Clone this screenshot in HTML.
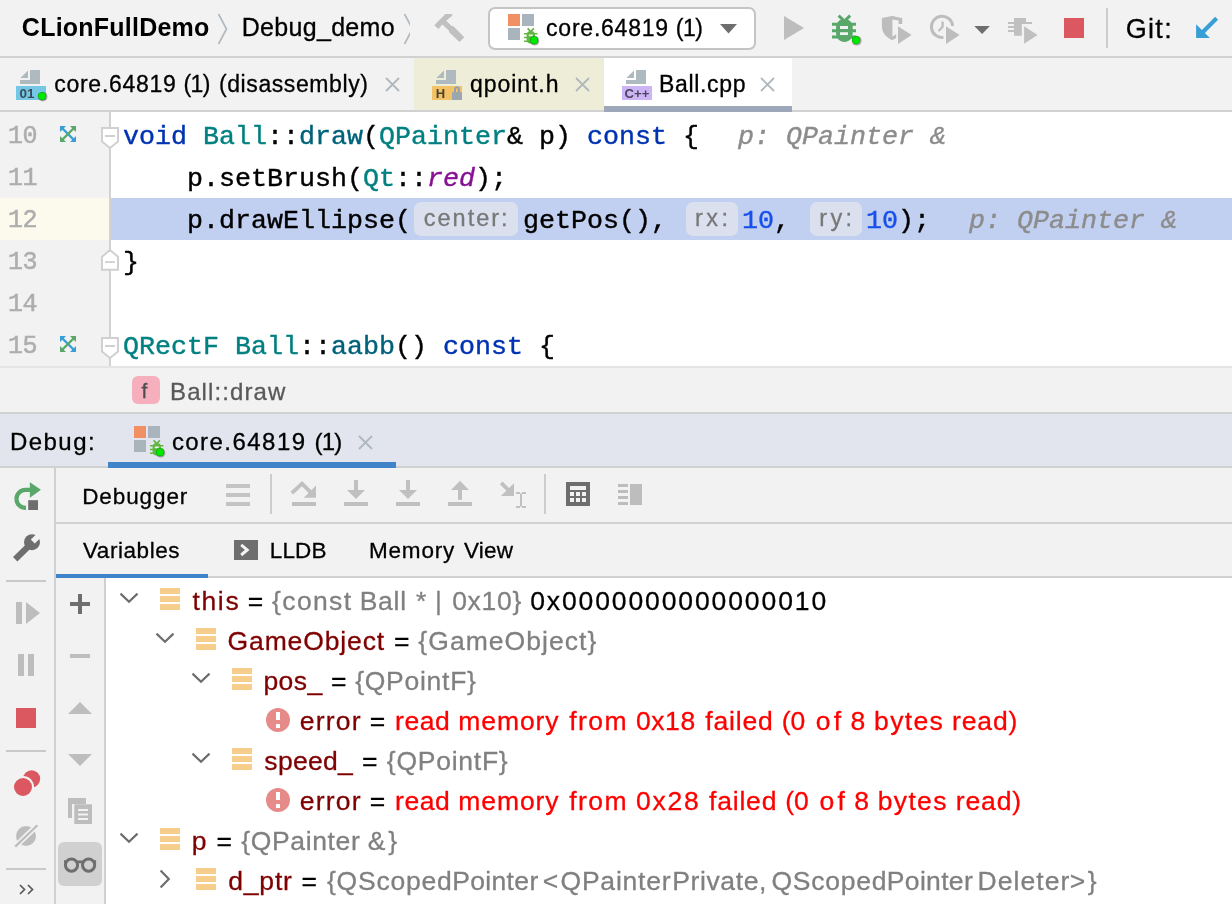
<!DOCTYPE html>
<html><head><meta charset="utf-8"><title>CLion</title>
<style>
html,body{margin:0;padding:0}
body{width:1232px;height:904px;overflow:hidden;background:#f2f2f2;position:relative;font-family:"Liberation Sans",sans-serif}
.a{position:absolute}
.t{position:absolute;white-space:pre;line-height:30px;-webkit-text-stroke:0.3px}
.m{position:absolute;white-space:pre;line-height:30px;font-family:"Liberation Mono",monospace;font-size:26.67px;-webkit-text-stroke:0.4px;color:#000}
.ln{position:absolute;left:8px;white-space:pre;line-height:30px;font-family:"Liberation Mono",monospace;font-size:25px;letter-spacing:-0.6px;-webkit-text-stroke:0.5px;color:#adadad}
.kw{color:#0033b3}.cl{color:#008080}.fn{color:#00627a}.nu{color:#1750eb}.it{color:#8c8c8c;font-style:italic}.en{color:#871094;font-style:italic}
.hint{position:absolute;top:202px;height:34px;border-radius:7px;background:#dae0ee}
svg{position:absolute;overflow:visible}
#root{position:absolute;left:0;top:0;width:1232px;height:904px;will-change:transform}
</style></head><body><div id="root">

<!-- ===== top toolbar ===== -->
<div class="a" style="left:0;top:56px;width:1232px;height:2px;background:#d1d1d1"></div>
<svg style="left:216px;top:13px" width="14" height="32" viewBox="0 0 14 32"><path d="M2.5 1 L10.5 16 L2.5 31" fill="none" stroke="#b2b9bf" stroke-width="1.7"/></svg>
<svg style="left:402px;top:13px;overflow:hidden" width="8.3" height="32" viewBox="0 0 8.3 32"><path d="M2.5 1 L10.5 16 L2.5 31" fill="none" stroke="#b2b9bf" stroke-width="1.7"/></svg>
<!-- hammer -->
<svg style="left:430px;top:10px" width="40" height="36" viewBox="430 10 40 36"><path d="M434.3 25.2 L445.4 14.1 L452.2 14.1 L452.2 15.8 L446.2 20.8 L451.6 25.9 L453.4 26.2 L464.3 37.2 L459.5 42.1 L449.4 32.6 L448.8 30.6 L442.4 24.6 L438.4 29 Z" fill="#c0c0c0"/></svg>
<!-- run config dropdown -->
<div class="a" style="left:488px;top:7px;width:264px;height:39px;border:2px solid #c4c4c4;border-radius:7px;background:#fff"></div>
<div class="a" style="left:508px;top:14px;width:12px;height:12px;background:#f19064"></div>
<div class="a" style="left:522px;top:14px;width:12px;height:12px;background:#a9b4bc"></div>
<div class="a" style="left:508px;top:28px;width:12px;height:12px;background:#a9b4bc"></div>
<svg style="left:523px;top:27px" width="20" height="20" viewBox="0 0 20 20"><g stroke="#62b543" fill="none"><path d="M4.6 1.4 L7.75 4.6 L10.9 1.4" stroke-width="1.7"/><path d="M1 6.8H14.5M1 10.5H14.5M1 14.2H14.5" stroke-width="1.6"/></g><rect x="3.6" y="4" width="8.4" height="12.6" rx="4" fill="#62b543"/><rect x="5.8" y="7.5" width="4" height="1.7" fill="#fff" opacity=".85"/><circle cx="11.7" cy="13.9" r="4.6" fill="#6a5a6a" opacity=".5"/><circle cx="11.1" cy="13.3" r="4.1" fill="#00a800"/><circle cx="11.1" cy="13.3" r="3.5" fill="#00e800"/></svg>
<svg style="left:720px;top:24px" width="18" height="10" viewBox="0 0 18 10"><path d="M0 0 H17 L8.5 9.5 Z" fill="#6e6e6e"/></svg>
<!-- run -->
<svg style="left:784px;top:16px" width="20" height="24" viewBox="0 0 20 24"><path d="M0 0 L20 12 L0 24 Z" fill="#bdbdbd"/></svg>
<!-- debug bug -->
<svg style="left:828px;top:10px" width="36" height="36" viewBox="828 10 36 36"><g fill="#59a869"><path d="M836.1 27 C836.1 22.4 839.8 19.1 844.4 19.1 C849 19.1 852.7 22.4 852.7 27 V33.5 C852.7 38.5 849 41.9 844.4 41.9 C839.8 41.9 836.1 38.5 836.1 33.5 Z"/><path d="M832 22.8h24v3h-24zM832 29.2h24v3h-24zM832 35.6h24v3h-24z"/></g><path d="M838.6 15.6 L844.4 21 L850.2 15.6" fill="none" stroke="#59a869" stroke-width="3"/><path d="M840 26h8v2.9h-8zM840 32.2h8v2.9h-8z" fill="#f2f2f2"/><circle cx="856.7" cy="40.7" r="4.9" fill="#6a5a6a" opacity=".5"/><circle cx="856.1" cy="40.1" r="4.2" fill="#00a800"/><circle cx="856.1" cy="40.1" r="3.6" fill="#00e800"/></svg>
<!-- coverage (shield + play) -->
<svg style="left:878px;top:10px" width="40" height="36" viewBox="878 10 40 36"><path d="M881.9 18 C886 17.6 889 16.8 892.2 15.8 C895.4 16.8 898 17.6 902.2 18 V24 H898.6 V20.6 L892.4 19.6 V36.8 L896.3 34 V38 L892.2 40.2 C885 36.5 881.9 32 881.9 26 Z" fill="#bdbdbd"/><path d="M898 26.3 L911.6 35 L898 43.9 Z" fill="#bdbdbd" stroke="#f2f2f2" stroke-width="3" paint-order="stroke"/></svg>
<!-- profile (clock + play) -->
<svg style="left:926px;top:10px" width="40" height="36" viewBox="926 10 40 36"><path d="M952.6 26 A10.6 10.6 0 1 0 943.4 37.3" fill="none" stroke="#bdbdbd" stroke-width="3"/><path d="M942.6 21.4 V26.9 L938.6 31" fill="none" stroke="#bdbdbd" stroke-width="2.3"/><path d="M946 26.3 L959.6 35 L946 43.9 Z" fill="#bdbdbd" stroke="#f2f2f2" stroke-width="3" paint-order="stroke"/></svg>
<svg style="left:974px;top:26px" width="17" height="9" viewBox="0 0 17 9"><path d="M0.3 0 H15.9 L8.1 8 Z" fill="#6e6e6e"/></svg>
<!-- run multiple -->
<svg style="left:1004px;top:10px" width="40" height="36" viewBox="1004 10 40 36"><g fill="#c0c0c0"><path d="M1014 18.1 H1026 V22 H1032.1 V24 H1021.8 V35.8 H1014 Z"/><path d="M1008 22h6v2h-6zM1008 26h6v2h-6zM1008 30h6v2h-6z"/><path d="M1024.1 26.3 L1037.6 35 L1024.1 43.8 Z"/></g></svg>
<div class="a" style="left:1064px;top:18px;width:20px;height:20px;background:#db5860"></div>
<div class="a" style="left:1106px;top:8px;width:2px;height:40px;background:#cdcdcd"></div>
<!-- git update arrow -->
<svg style="left:1192px;top:12px" width="30" height="30" viewBox="1192 12 30 30"><path d="M1216.6 18.3 L1202.4 32.5" stroke="#389fd6" stroke-width="4.2" fill="none"/><path d="M1196.1 24.3 V38 H1209.9 Z" fill="#389fd6"/></svg>

<!-- ===== editor tabs ===== -->
<div class="a" style="left:414px;top:58px;width:190px;height:52px;background:#eeeed8"></div>
<div class="a" style="left:604px;top:58px;width:188px;height:52px;background:#fff"></div>
<div class="a" style="left:0;top:110px;width:1232px;height:2px;background:#d1d1d1"></div>
<div class="a" style="left:604px;top:106px;width:188px;height:6px;background:#9ca8ba"></div>
<!-- file icons -->
<svg style="left:16px;top:70px" width="32" height="32" viewBox="0 0 32 32"><path d="M14 0h10v14H4v-4h10z" fill="#aeb9c0"/><path d="M12 0.4 V8 H4.4Z" fill="#aeb9c0"/><rect x="0" y="16" width="30" height="14" fill="#74c8e6"/><text x="3.6" y="28" font-family="Liberation Sans" font-weight="bold" font-size="13.5" fill="#3b4a54">01</text><circle cx="26.7" cy="26.7" r="4.8" fill="#6a5a6a" opacity=".5"/><circle cx="26.1" cy="26.1" r="4.2" fill="#00a800"/><circle cx="26.1" cy="26.1" r="3.6" fill="#00e800"/></svg>
<svg style="left:432px;top:70px" width="32" height="32" viewBox="0 0 32 32"><path d="M14 0h10v14H4v-4h10z" fill="#aeb9c0"/><path d="M12 0.4 V8 H4.4Z" fill="#aeb9c0"/><rect x="0" y="16" width="30" height="14" fill="#f4c266"/><text x="3.8" y="28" font-family="Liberation Sans" font-weight="bold" font-size="13" fill="#4a4333">H</text><rect x="20" y="22.2" width="10" height="7.8" fill="#9aa7b0"/><path d="M23 22.4 v-3.1 a1.9 2.1 0 0 1 3.8 0 v3.1" fill="none" stroke="#8fa0b3" stroke-width="2"/></svg>
<svg style="left:622px;top:70px" width="32" height="32" viewBox="0 0 32 32"><path d="M14 0h10v14H4v-4h10z" fill="#aeb9c0"/><path d="M12 0.4 V8 H4.4Z" fill="#aeb9c0"/><rect x="0" y="16" width="30" height="14" fill="#cdb5f5"/><text x="2.6" y="28" font-family="Liberation Sans" font-weight="bold" font-size="13.2" fill="#4b4360">C++</text></svg>
<!-- close X -->
<svg style="left:385px;top:77px" width="15" height="15" viewBox="0 0 15 15"><path d="M1 1 L14 14 M14 1 L1 14" stroke="#b1b8bd" stroke-width="1.8" fill="none"/></svg>
<svg style="left:575px;top:77px" width="15" height="15" viewBox="0 0 15 15"><path d="M1 1 L14 14 M14 1 L1 14" stroke="#b1b8bd" stroke-width="1.8" fill="none"/></svg>
<svg style="left:760px;top:77px" width="15" height="15" viewBox="0 0 15 15"><path d="M1 1 L14 14 M14 1 L1 14" stroke="#b1b8bd" stroke-width="1.8" fill="none"/></svg>

<!-- ===== editor ===== -->
<div class="a" style="left:111px;top:112px;width:1121px;height:254px;background:#fff"></div>
<div class="a" style="left:109px;top:112px;width:2px;height:254px;background:#d2d2d2"></div>
<div class="a" style="left:0;top:198px;width:109px;height:42px;background:#fcfaed"></div>
<div class="a" style="left:111px;top:198px;width:1121px;height:42px;background:#c1cff0"></div>
<div class="ln" style="top:122px">10</div>
<div class="ln" style="top:164px">11</div>
<div class="ln" style="top:206px">12</div>
<div class="ln" style="top:248px">13</div>
<div class="ln" style="top:290px">14</div>
<div class="ln" style="top:332px">15</div>
<!-- gutter icons -->
<svg style="left:59px;top:125px" width="18" height="18" viewBox="0 0 18 18"><path d="M3 3 L15 15" stroke="#389fd6" stroke-width="2.4"/><path d="M15 3 L3 15" stroke="#59a869" stroke-width="2.4"/><path d="M1 1 h6 l-6 6z M17 17 h-6 l6 -6z" fill="#389fd6"/><path d="M17 1 v6 l-6 -6z M1 17 v-6 l6 6z" fill="#59a869"/></svg>
<svg style="left:59px;top:335px" width="18" height="18" viewBox="0 0 18 18"><path d="M3 3 L15 15" stroke="#389fd6" stroke-width="2.4"/><path d="M15 3 L3 15" stroke="#59a869" stroke-width="2.4"/><path d="M1 1 h6 l-6 6z M17 17 h-6 l6 -6z" fill="#389fd6"/><path d="M17 1 v6 l-6 -6z M1 17 v-6 l6 6z" fill="#59a869"/></svg>
<!-- fold markers -->
<svg style="left:100px;top:127px" width="20" height="24" viewBox="0 0 20 24"><path d="M2 1 H18 V14.5 L10 21 L2 14.5 Z" fill="#fff" stroke="#d0d0d0" stroke-width="2"/><path d="M5 8h10v2H5z" fill="#d0d0d0"/></svg>
<svg style="left:100px;top:337px" width="20" height="24" viewBox="0 0 20 24"><path d="M2 1 H18 V14.5 L10 21 L2 14.5 Z" fill="#fff" stroke="#d0d0d0" stroke-width="2"/><path d="M5 8h10v2H5z" fill="#d0d0d0"/></svg>
<svg style="left:100px;top:248px" width="20" height="24" viewBox="0 0 20 24"><path d="M2 21.7 H18 V8.8 L10 2 L2 8.8 Z" fill="#fff" stroke="#d0d0d0" stroke-width="2"/><path d="M5 13.2h10v1.8H5z" fill="#d0d0d0"/></svg>
<!-- code -->
<div class="m" style="left:123px;top:122px"><span class="kw">void</span> <span class="cl">Ball</span>::<span class="fn">draw</span>(<span class="cl">QPainter</span>&amp; p) <span class="kw">const</span> {</div>
<div class="m it" style="left:738px;top:122px">p: QPainter &amp;</div>
<div class="m" style="left:187px;top:164px">p.setBrush(<span class="cl">Qt</span>::<span class="en">red</span>);</div>
<div class="m" style="left:187px;top:206px">p.drawEllipse(</div>
<div class="hint" style="left:414px;width:104px"></div>
<div class="m" style="left:523px;top:206px">getPos(),</div>
<div class="hint" style="left:686px;width:52px"></div>
<div class="m" style="left:742px;top:206px"><span class="nu">10</span>,</div>
<div class="hint" style="left:810px;width:52px"></div>
<div class="m" style="left:866px;top:206px"><span class="nu">10</span>);</div>
<div class="m it" style="left:969px;top:206px">p: QPainter &amp;</div>
<div class="m" style="left:123px;top:248px">}</div>
<div class="m" style="left:123px;top:332px"><span class="cl">QRectF</span> <span class="cl">Ball</span>::<span class="fn">aabb</span>() <span class="kw">const</span> {</div>

<!-- ===== breadcrumb ===== -->
<div class="a" style="left:0;top:366px;width:1232px;height:2px;background:#e4e4e4"></div>
<div class="a" style="left:0;top:412px;width:1232px;height:2px;background:#d1d1d1"></div>
<div class="a" style="left:132px;top:376px;width:28px;height:28px;border-radius:6px;background:#f5afbd"></div>

<!-- ===== debug tool window header ===== -->
<div class="a" style="left:0;top:414px;width:1232px;height:52px;background:#e2e5ee"></div>
<div class="a" style="left:0;top:466px;width:1232px;height:2px;background:#d1d1d1"></div>
<div class="a" style="left:108px;top:462px;width:288px;height:6px;background:#4083c9"></div>
<div class="a" style="left:134px;top:426px;width:12px;height:12px;background:#f19064"></div>
<div class="a" style="left:148px;top:426px;width:12px;height:12px;background:#a9b4bc"></div>
<div class="a" style="left:134px;top:440px;width:12px;height:12px;background:#a9b4bc"></div>
<svg style="left:149px;top:439px" width="20" height="20" viewBox="0 0 20 20"><g stroke="#62b543" fill="none"><path d="M4.6 1.4 L7.75 4.6 L10.9 1.4" stroke-width="1.7"/><path d="M1 6.8H14.5M1 10.5H14.5M1 14.2H14.5" stroke-width="1.6"/></g><rect x="3.6" y="4" width="8.4" height="12.6" rx="4" fill="#62b543"/><rect x="5.8" y="7.5" width="4" height="1.7" fill="#fff" opacity=".85"/><circle cx="11.7" cy="13.9" r="4.6" fill="#6a5a6a" opacity=".5"/><circle cx="11.1" cy="13.3" r="4.1" fill="#00a800"/><circle cx="11.1" cy="13.3" r="3.5" fill="#00e800"/></svg>
<svg style="left:358px;top:435px" width="15" height="15" viewBox="0 0 15 15"><path d="M1 1 L14 14 M14 1 L1 14" stroke="#b1b8bd" stroke-width="1.8" fill="none"/></svg>

<!-- ===== debugger panel ===== -->
<div class="a" style="left:54px;top:468px;width:2px;height:436px;background:#d0d0d0"></div>
<div class="a" style="left:56px;top:522px;width:1176px;height:2px;background:#d1d1d1"></div>
<div class="a" style="left:56px;top:576px;width:1176px;height:2px;background:#d1d1d1"></div>
<div class="a" style="left:56px;top:574px;width:152px;height:4px;background:#4083c9"></div>
<div class="a" style="left:106px;top:578px;width:1126px;height:326px;background:#fff"></div>
<div class="a" style="left:104px;top:578px;width:2px;height:326px;background:#d0d0d0"></div>
<!--ICONS2-->
<!-- left tool column -->
<svg style="left:12px;top:480px" width="32" height="32" viewBox="0 0 32 32"><path d="M18 9.9 H13.5 A9 9 0 1 0 13.5 27.9 H14" fill="none" stroke="#59a869" stroke-width="4.2"/><path d="M17.9 2.2 L28.9 9.7 L17.9 17.7 Z" fill="#59a869"/><rect x="15.2" y="19.2" width="12" height="12" fill="#f2f2f2"/><rect x="16.2" y="20.2" width="9.8" height="9.8" fill="#6e6e6e"/></svg>
<svg style="left:12px;top:533px" width="30" height="30" viewBox="0 0 30 30"><path d="M3.2 26.3 L17 12.8" stroke="#6e6e6e" stroke-width="6.2" fill="none"/><circle cx="20" cy="9.2" r="8" fill="#6e6e6e"/><path d="M20.8 8.6 L29 0.4" stroke="#f2f2f2" stroke-width="5.6" fill="none"/></svg>
<div class="a" style="left:6px;top:580px;width:40px;height:2px;background:#c9c9c9"></div>
<svg style="left:16px;top:602px" width="24" height="23" viewBox="0 0 24 23"><path d="M0 0h6v22H0zM10 0 L24 11 L10 22z" fill="#bdbdbd"/></svg>
<div class="a" style="left:18px;top:654px;width:6px;height:22px;background:#bdbdbd"></div>
<div class="a" style="left:28px;top:654px;width:6px;height:22px;background:#bdbdbd"></div>
<div class="a" style="left:16px;top:708px;width:20px;height:20px;background:#db5860"></div>
<div class="a" style="left:6px;top:750px;width:40px;height:2px;background:#c9c9c9"></div>
<svg style="left:12px;top:768px" width="32" height="32" viewBox="0 0 32 32"><circle cx="19.6" cy="10.8" r="8.6" fill="#db5860"/><circle cx="11" cy="19" r="11" fill="#f2f2f2"/><circle cx="11" cy="19" r="9" fill="#db5860"/></svg>
<svg style="left:12px;top:822px" width="32" height="32" viewBox="0 0 32 32"><circle cx="14" cy="14" r="10" fill="#bdbdbd"/><path d="M3.2 24.6 L25.4 3.2" stroke="#f2f2f2" stroke-width="5.5"/><path d="M3.2 24.6 L25.4 3.2" stroke="#bdbdbd" stroke-width="2.2"/></svg>
<div class="a" style="left:6px;top:868px;width:40px;height:2px;background:#c9c9c9"></div>
<svg style="left:19px;top:884px" width="16" height="11" viewBox="0 0 16 11"><path d="M1 1 L5.5 5.5 L1 10 M9 1 L13.5 5.5 L9 10" fill="none" stroke="#595959" stroke-width="1.7"/></svg>
<!-- debugger toolbar icons -->
<div class="a" style="left:226px;top:484px;width:24px;height:4px;background:#c4c4c4"></div>
<div class="a" style="left:226px;top:493px;width:24px;height:4px;background:#c4c4c4"></div>
<div class="a" style="left:226px;top:502px;width:24px;height:4px;background:#c4c4c4"></div>
<div class="a" style="left:270px;top:474px;width:2px;height:40px;background:#cdcdcd"></div>
<svg style="left:288px;top:478px" width="32" height="32" viewBox="0 0 32 32"><g fill="#c0c0c0"><path d="M4 24h24v4H4z"/><path d="M28 7.6 V19.8 H15.7 Z"/></g><path d="M3.8 15.2 L14 5.6 L23 14.6" fill="none" stroke="#c0c0c0" stroke-width="3.8"/></svg>
<svg style="left:340px;top:478px" width="32" height="32" viewBox="0 0 32 32"><g fill="#c0c0c0"><path d="M4 24h24v4H4z"/><path d="M14 2h4v11h-4z"/><path d="M7 12 H25 L16 21 Z"/></g></svg>
<svg style="left:392px;top:478px" width="32" height="32" viewBox="0 0 32 32"><g fill="#c0c0c0"><path d="M4 24h24v4H4z"/><path d="M14 2h4v11h-4z"/><path d="M7 12 H25 L16 21 Z"/></g></svg>
<svg style="left:444px;top:478px" width="32" height="32" viewBox="0 0 32 32"><g fill="#c0c0c0"><path d="M4 24h24v4H4z"/><path d="M14 11.5h4v10.3h-4z"/><path d="M7 12 H25 L16 2.8 Z"/></g></svg>
<svg style="left:496px;top:478px" width="32" height="32" viewBox="0 0 32 32"><path d="M5.2 4.8 L14 13.6" stroke="#c0c0c0" stroke-width="3.8" fill="none"/><path d="M18 5.2 V17.9 H4.9 Z" fill="#c0c0c0"/><g fill="#c0c0c0"><path d="M20 14h4v2h-4zM26 14h4v2h-4zM20 28h4v2h-4zM26 28h4v2h-4zM24 15.5h2v13h-2z"/></g></svg>
<div class="a" style="left:544px;top:474px;width:2px;height:40px;background:#cdcdcd"></div>
<svg style="left:566px;top:482px" width="24" height="24" viewBox="0 0 24 24"><path d="M0 0h24v24H0z" fill="#6e6e6e"/><g fill="#f2f2f2"><path d="M4 4h16v4H4z"/><path d="M4 10h4v4H4zM10 10h4v4h-4zM16 10h4v4h-4zM4 16h4v4H4zM10 16h4v4h-4zM16 16h4v4h-4z"/></g></svg>
<svg style="left:618px;top:484px" width="24" height="22" viewBox="0 0 24 22"><g fill="#bdbdbd"><path d="M0 0h10v3H0zM0 6h10v3H0zM0 12h10v3H0zM0 18h10v3H0zM12 0h12v21H12z"/></g></svg>
<!-- LLDB console icon -->
<svg style="left:234px;top:540px" width="24" height="20" viewBox="0 0 24 20"><rect width="24" height="20" fill="#6e6e6e"/><path d="M7.2 4.8 L13.2 9.9 L7.2 15" fill="none" stroke="#f4f4f4" stroke-width="3"/></svg>
<!-- variables side column -->
<div class="a" style="left:70px;top:602px;width:20px;height:4px;background:#6e6e6e"></div>
<div class="a" style="left:78px;top:594px;width:4px;height:20px;background:#6e6e6e"></div>
<div class="a" style="left:70px;top:654px;width:20px;height:4px;background:#bdbdbd"></div>
<svg style="left:68px;top:702px" width="24" height="12" viewBox="0 0 24 12"><path d="M0 12 L12 0 L24 12 Z" fill="#bdbdbd"/></svg>
<svg style="left:68px;top:754px" width="24" height="12" viewBox="0 0 24 12"><path d="M0 0 L12 12 L24 0 Z" fill="#bdbdbd"/></svg>
<svg style="left:68px;top:798px" width="24" height="26" viewBox="0 0 24 26"><path d="M0 0h18v6H4v14H0z" fill="#bdbdbd"/><path d="M6.3 6.3H24V26H6.3z" fill="#bdbdbd"/><path d="M10 11h10v2H10zM10 15.5h10v2H10zM10 20h10v2H10z" fill="#f2f2f2"/></svg>
<div class="a" style="left:58px;top:842px;width:44px;height:44px;border-radius:6px;background:#d0d0d0"></div>
<svg style="left:64px;top:856px" width="32" height="18" viewBox="0 0 32 18"><g fill="none" stroke="#6e6e6e" stroke-width="3"><circle cx="7.5" cy="9.1" r="6.1"/><circle cx="24.6" cy="9.1" r="6.1"/></g><path d="M13 4.4h6v2.8h-6zM0 4.2h3v3.4H0zM29.1 4.2h3v3.4h-3z" fill="#6e6e6e"/></svg>

<svg style="left:119px;top:592px" width="20" height="12" viewBox="0 0 20 12"><path d="M1.5 1.6 L10 9.8 L18.5 1.6" fill="none" stroke="#6e6e6e" stroke-width="2.2"/></svg>
<div class="a" style="left:160px;top:588px;width:20px;height:6px;background:#f6cd8b"></div>
<div class="a" style="left:160px;top:596px;width:20px;height:6px;background:#f6cd8b"></div>
<div class="a" style="left:160px;top:604px;width:20px;height:6px;background:#f6cd8b"></div>
<svg style="left:155px;top:632px" width="20" height="12" viewBox="0 0 20 12"><path d="M1.5 1.6 L10 9.8 L18.5 1.6" fill="none" stroke="#6e6e6e" stroke-width="2.2"/></svg>
<div class="a" style="left:196px;top:628px;width:20px;height:6px;background:#f6cd8b"></div>
<div class="a" style="left:196px;top:636px;width:20px;height:6px;background:#f6cd8b"></div>
<div class="a" style="left:196px;top:644px;width:20px;height:6px;background:#f6cd8b"></div>
<svg style="left:191px;top:672px" width="20" height="12" viewBox="0 0 20 12"><path d="M1.5 1.6 L10 9.8 L18.5 1.6" fill="none" stroke="#6e6e6e" stroke-width="2.2"/></svg>
<div class="a" style="left:232px;top:668px;width:20px;height:6px;background:#f6cd8b"></div>
<div class="a" style="left:232px;top:676px;width:20px;height:6px;background:#f6cd8b"></div>
<div class="a" style="left:232px;top:684px;width:20px;height:6px;background:#f6cd8b"></div>
<svg style="left:266px;top:708px" width="24" height="24" viewBox="0 0 24 24"><circle cx="12" cy="12" r="12" fill="#e68a8a"/><path d="M10 4h4v8h-4zM10 16h4v4h-4z" fill="#fff"/></svg>
<svg style="left:191px;top:752px" width="20" height="12" viewBox="0 0 20 12"><path d="M1.5 1.6 L10 9.8 L18.5 1.6" fill="none" stroke="#6e6e6e" stroke-width="2.2"/></svg>
<div class="a" style="left:232px;top:748px;width:20px;height:6px;background:#f6cd8b"></div>
<div class="a" style="left:232px;top:756px;width:20px;height:6px;background:#f6cd8b"></div>
<div class="a" style="left:232px;top:764px;width:20px;height:6px;background:#f6cd8b"></div>
<svg style="left:266px;top:788px" width="24" height="24" viewBox="0 0 24 24"><circle cx="12" cy="12" r="12" fill="#e68a8a"/><path d="M10 4h4v8h-4zM10 16h4v4h-4z" fill="#fff"/></svg>
<svg style="left:119px;top:832px" width="20" height="12" viewBox="0 0 20 12"><path d="M1.5 1.6 L10 9.8 L18.5 1.6" fill="none" stroke="#6e6e6e" stroke-width="2.2"/></svg>
<div class="a" style="left:160px;top:828px;width:20px;height:6px;background:#f6cd8b"></div>
<div class="a" style="left:160px;top:836px;width:20px;height:6px;background:#f6cd8b"></div>
<div class="a" style="left:160px;top:844px;width:20px;height:6px;background:#f6cd8b"></div>
<svg style="left:159px;top:869px" width="12" height="20" viewBox="0 0 12 20"><path d="M1.6 1.5 L9.8 10 L1.6 18.5" fill="none" stroke="#6e6e6e" stroke-width="2.2"/></svg>
<div class="a" style="left:196px;top:868px;width:20px;height:6px;background:#f6cd8b"></div>
<div class="a" style="left:196px;top:876px;width:20px;height:6px;background:#f6cd8b"></div>
<div class="a" style="left:196px;top:884px;width:20px;height:6px;background:#f6cd8b"></div>
<span class="t" style="left:21.87px;top:12px;font-size:25px;letter-spacing:0.232px;color:#000;font-weight:bold;-webkit-text-stroke:0;">CLionFullDemo</span>
<span class="t" style="left:241.65px;top:12px;font-size:25px;letter-spacing:0.320px;color:#000;">Debug_demo</span>
<span class="t" style="left:546.12px;top:13px;font-size:23px;letter-spacing:0.764px;color:#000;">core.64819 </span>
<span class="t" style="left:675.77px;top:13px;font-size:23px;letter-spacing:-0.436px;color:#000;">(1) </span>
<span class="t" style="left:1125.64px;top:14px;font-size:27px;letter-spacing:1.336px;color:#000;">Git:</span>
<span class="t" style="left:54.22px;top:69px;font-size:23px;letter-spacing:0.730px;color:#000;">core.64819 </span>
<span class="t" style="left:183.57px;top:69px;font-size:23px;letter-spacing:-0.686px;color:#000;">(1) </span>
<span class="t" style="left:218.97px;top:69px;font-size:23px;letter-spacing:0.590px;color:#000;">(disassembly)</span>
<span class="t" style="left:470.03px;top:69px;font-size:23px;letter-spacing:0.943px;color:#000;">qpoint.h</span>
<span class="t" style="left:659.11px;top:69px;font-size:23px;letter-spacing:0.646px;color:#000;">Ball.cpp</span>
<span class="t" style="left:170.03px;top:377px;font-size:24px;letter-spacing:1.104px;color:#595959;">Ball::draw</span>
<span class="t" style="left:9.93px;top:427px;font-size:24px;letter-spacing:1.474px;color:#000;">Debug: </span>
<span class="t" style="left:171.88px;top:427px;font-size:24px;letter-spacing:1.451px;color:#000;">core.64819 </span>
<span class="t" style="left:314.51px;top:427px;font-size:24px;letter-spacing:-0.734px;color:#000;">(1) </span>
<span class="t" style="left:82.15px;top:482px;font-size:22.5px;letter-spacing:0.913px;color:#000;">Debugger</span>
<span class="t" style="left:82.90px;top:536px;font-size:22.5px;letter-spacing:0.571px;color:#000;">Variables</span>
<span class="t" style="left:269.85px;top:536px;font-size:22.5px;letter-spacing:0.112px;color:#000;">LLDB</span>
<span class="t" style="left:368.95px;top:536px;font-size:22.5px;letter-spacing:0.825px;color:#000;">Memory </span>
<span class="t" style="left:463.90px;top:536px;font-size:22.5px;letter-spacing:0.290px;color:#000;">View</span>
<span class="t" style="left:192.40px;top:586px;font-size:26.5px;letter-spacing:1.670px;color:#7f0000;">this </span>
<span class="t" style="left:247.71px;top:586px;font-size:26.5px;letter-spacing:0.000px;color:#000;">= </span>
<span class="t" style="left:272.06px;top:586px;font-size:26.5px;letter-spacing:1.366px;color:#808080;">{const </span>
<span class="t" style="left:359.63px;top:586px;font-size:26.5px;letter-spacing:0.748px;color:#808080;">Ball </span>
<span class="t" style="left:415.97px;top:586px;font-size:26.5px;letter-spacing:0.000px;color:#808080;">* </span>
<span class="t" style="left:434.93px;top:586px;font-size:26.5px;letter-spacing:0.000px;color:#808080;">| </span>
<span class="t" style="left:452.16px;top:586px;font-size:26.5px;letter-spacing:0.721px;color:#808080;">0x10} </span>
<span class="t" style="left:530.16px;top:586px;font-size:26.5px;letter-spacing:1.893px;color:#000;">0x0000000000000010</span>
<span class="t" style="left:227.57px;top:626px;font-size:26.5px;letter-spacing:0.873px;color:#7f0000;">GameObject </span>
<span class="t" style="left:394.01px;top:626px;font-size:26.5px;letter-spacing:0.000px;color:#000;">= </span>
<span class="t" style="left:418.36px;top:626px;font-size:26.5px;letter-spacing:1.042px;color:#808080;">{GameObject}</span>
<span class="t" style="left:263.39px;top:666px;font-size:26.5px;letter-spacing:0.447px;color:#7f0000;">pos_ </span>
<span class="t" style="left:331.11px;top:666px;font-size:26.5px;letter-spacing:0.000px;color:#000;">= </span>
<span class="t" style="left:355.16px;top:666px;font-size:26.5px;letter-spacing:0.739px;color:#808080;">{QPointF}</span>
<span class="t" style="left:299.87px;top:706px;font-size:26.5px;letter-spacing:1.178px;color:#7f0000;">error </span>
<span class="t" style="left:369.81px;top:706px;font-size:26.5px;letter-spacing:0.000px;color:#000;">= </span>
<span class="t" style="left:395.04px;top:706px;font-size:26.5px;letter-spacing:0.574px;color:#ff0000;">read </span>
<span class="t" style="left:458.34px;top:706px;font-size:26.5px;letter-spacing:0.902px;color:#ff0000;">memory </span>
<span class="t" style="left:569.22px;top:706px;font-size:26.5px;letter-spacing:1.441px;color:#ff0000;">from </span>
<span class="t" style="left:636.06px;top:706px;font-size:26.5px;letter-spacing:0.539px;color:#ff0000;">0x18 </span>
<span class="t" style="left:705.32px;top:706px;font-size:26.5px;letter-spacing:0.805px;color:#ff0000;">failed </span>
<span class="t" style="left:781.66px;top:706px;font-size:26.5px;letter-spacing:-0.100px;color:#ff0000;">(0 </span>
<span class="t" style="left:815.69px;top:706px;font-size:26.5px;letter-spacing:3.265px;color:#ff0000;">of </span>
<span class="t" style="left:850.45px;top:706px;font-size:26.5px;letter-spacing:0.000px;color:#ff0000;">8 </span>
<span class="t" style="left:874.09px;top:706px;font-size:26.5px;letter-spacing:1.330px;color:#ff0000;">bytes </span>
<span class="t" style="left:952.04px;top:706px;font-size:26.5px;letter-spacing:0.882px;color:#ff0000;">read)</span>
<span class="t" style="left:299.87px;top:786px;font-size:26.5px;letter-spacing:1.178px;color:#7f0000;">error </span>
<span class="t" style="left:369.81px;top:786px;font-size:26.5px;letter-spacing:0.000px;color:#000;">= </span>
<span class="t" style="left:395.04px;top:786px;font-size:26.5px;letter-spacing:0.574px;color:#ff0000;">read </span>
<span class="t" style="left:458.34px;top:786px;font-size:26.5px;letter-spacing:0.902px;color:#ff0000;">memory </span>
<span class="t" style="left:569.22px;top:786px;font-size:26.5px;letter-spacing:1.441px;color:#ff0000;">from </span>
<span class="t" style="left:636.06px;top:786px;font-size:26.5px;letter-spacing:1.706px;color:#ff0000;">0x28 </span>
<span class="t" style="left:709.02px;top:786px;font-size:26.5px;letter-spacing:0.805px;color:#ff0000;">failed </span>
<span class="t" style="left:785.36px;top:786px;font-size:26.5px;letter-spacing:-0.100px;color:#ff0000;">(0 </span>
<span class="t" style="left:819.39px;top:786px;font-size:26.5px;letter-spacing:3.265px;color:#ff0000;">of </span>
<span class="t" style="left:854.15px;top:786px;font-size:26.5px;letter-spacing:0.000px;color:#ff0000;">8 </span>
<span class="t" style="left:877.79px;top:786px;font-size:26.5px;letter-spacing:1.330px;color:#ff0000;">bytes </span>
<span class="t" style="left:955.74px;top:786px;font-size:26.5px;letter-spacing:0.882px;color:#ff0000;">read)</span>
<span class="t" style="left:264.36px;top:746px;font-size:26.5px;letter-spacing:0.297px;color:#7f0000;">speed_ </span>
<span class="t" style="left:361.91px;top:746px;font-size:26.5px;letter-spacing:0.000px;color:#000;">= </span>
<span class="t" style="left:386.86px;top:746px;font-size:26.5px;letter-spacing:0.739px;color:#808080;">{QPointF}</span>
<span class="t" style="left:191.69px;top:826px;font-size:26.5px;letter-spacing:0.000px;color:#7f0000;">p </span>
<span class="t" style="left:216.41px;top:826px;font-size:26.5px;letter-spacing:0.000px;color:#000;">= </span>
<span class="t" style="left:241.26px;top:826px;font-size:26.5px;letter-spacing:0.630px;color:#808080;">{QPainter </span>
<span class="t" style="left:367.87px;top:826px;font-size:26.5px;letter-spacing:2.679px;color:#808080;">&amp;}</span>
<span class="t" style="left:228.19px;top:866px;font-size:26.5px;letter-spacing:0.837px;color:#7f0000;">d_ptr </span>
<span class="t" style="left:301.41px;top:866px;font-size:26.5px;letter-spacing:0.000px;color:#000;">= </span>
<span class="t" style="left:326.96px;top:866px;font-size:26.5px;letter-spacing:0.786px;color:#808080;">{QScoped</span>
<span class="t" style="left:452.23px;top:866px;font-size:26.5px;letter-spacing:0.341px;color:#808080;">Pointer</span>
<span class="t" style="left:542.69px;top:866px;font-size:26.5px;letter-spacing:0.000px;color:#808080;">&lt;</span>
<span class="t" style="left:560.54px;top:866px;font-size:26.5px;letter-spacing:0.774px;color:#808080;">QPainter</span>
<span class="t" style="left:672.23px;top:866px;font-size:26.5px;letter-spacing:0.616px;color:#808080;">Private, </span>
<span class="t" style="left:771.44px;top:866px;font-size:26.5px;letter-spacing:0.744px;color:#808080;">QScoped</span>
<span class="t" style="left:886.83px;top:866px;font-size:26.5px;letter-spacing:0.324px;color:#808080;">Pointer</span>
<span class="t" style="left:977.43px;top:866px;font-size:26.5px;letter-spacing:1.096px;color:#808080;">Deleter</span>
<span class="t" style="left:1069.69px;top:866px;font-size:26.5px;letter-spacing:2.558px;color:#808080;">&gt;}</span>
<span class="t" style="left:423.80px;top:203px;font-size:23.5px;letter-spacing:1.983px;color:#787878;">center:</span>
<span class="t" style="left:694.94px;top:203px;font-size:23.5px;letter-spacing:3.548px;color:#787878;">rx:</span>
<span class="t" style="left:819.14px;top:203px;font-size:23.5px;letter-spacing:3.448px;color:#787878;">ry:</span>
<span class="t" style="left:141.60px;top:376px;font-size:21px;letter-spacing:0.000px;color:#4d4d4d;">f</span>
</div></body></html>
